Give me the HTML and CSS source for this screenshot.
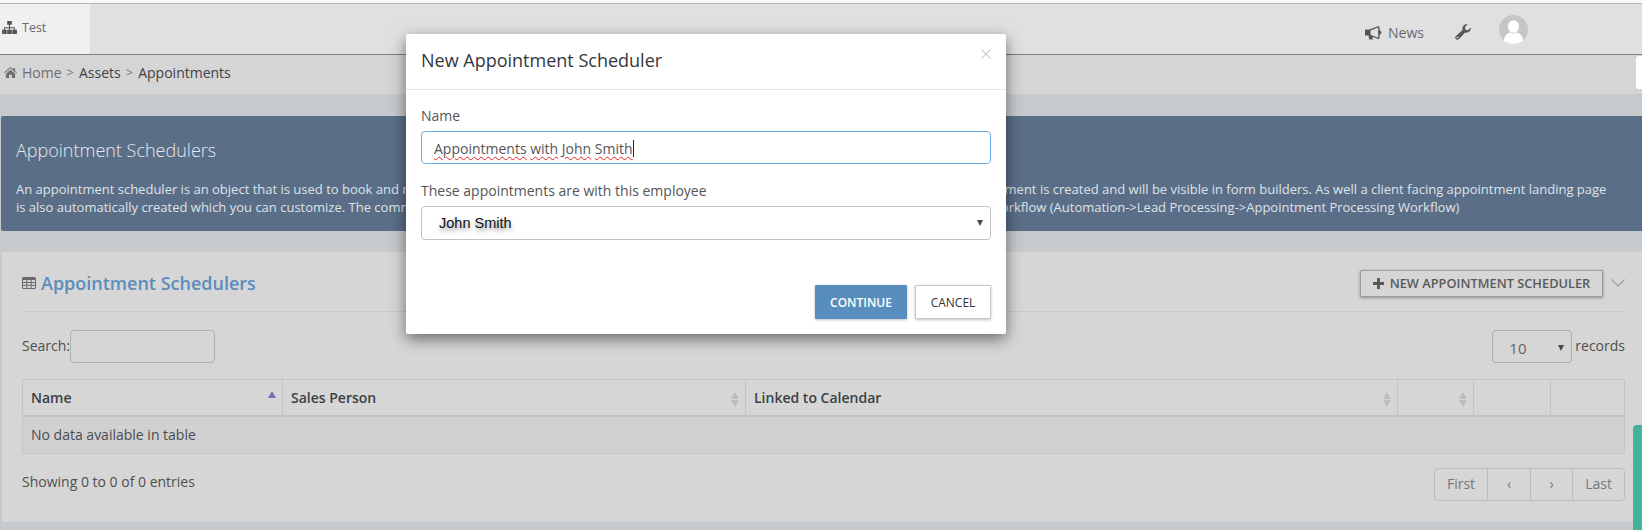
FILE: index.html
```html
<!DOCTYPE html>
<html lang="en">
<head>
<meta charset="utf-8">
<title>Appointment Schedulers</title>
<link rel="stylesheet" href="styles.css">
</head>
<body>
<div class="edge"></div>
<header class="topbar">
  <div class="tab">
    <svg class="icon-sitemap" viewBox="0 0 16 14"><path d="M5.500 0h5v4h-5zM7.400 4h1.200v2.600h5.200V9.500h-1.200V7.800H8.600V9.500H7.400V7.800H3.400v1.700H2.200V6.600h5.200zM0 9.500h5V14H0zM5.500 9.500h5V14h-5zM11 9.500h5V14h-5z"/></svg>
    <span>Test</span>
  </div>
  <nav class="topnav">
    <svg class="icon-bullhorn" viewBox="0 0 17 14"><path d="M0 3.500h4.200L13 0.300c.8-.3 1.600.2 1.600 1v3.100c1.100.3 1.900 1.200 1.900 2.200s-.8 1.900-1.900 2.200v3.100c0 .8-.8 1.300-1.600 1L7.500 10.800 7.800 13.500H4.200L3.500 9.500H0zM5.500 4.400v4.400l7.700 2.900V1.500z"/></svg>
    <span class="news">News</span>
    <svg class="icon-wrench" viewBox="0 0 16 16"><path d="M15.700 3.600c.3 1.500-.2 3-1.300 4-1.200 1-2.800 1.300-4.300.8L4 15.100c-.9.900-2.200.9-3.100 0s-.9-2.200 0-3.100l6.700-6.100C7.100 4.400 7.400 2.800 8.500 1.700 9.500.6 11 .1 12.500.4L9.900 3l.6 2.700 2.600.6zM2.500 12.500a.9.9 0 1 0 0 1.800.9.9 0 0 0 0-1.800z"/></svg>
    <svg class="avatar" viewBox="0 0 29 29"><circle cx="14.500" cy="14.500" r="14.500" fill="#c6c6c6"/><ellipse cx="14.500" cy="11.500" rx="5.600" ry="6.300" fill="#fff"/><path d="M4.800 25.500c.5-4.500 3.500-7.500 6.700-8 1.800 1.200 4.200 1.200 6 0 3.200.5 6.200 3.500 6.700 8-2.600 2.200-5.800 3.500-9.700 3.500s-7.100-1.300-9.700-3.500z" fill="#fff"/></svg>
  </nav>
</header>

<div class="crumbs">
  <svg class="icon-home" viewBox="0 0 14 12"><path d="M7 0 10 2.600V1h2v3.300L14 6l-.7.800L7 1.400.7 6.800 0 6zM2 7.300 7 3l5 4.300V12H8.500V8.500h-3V12H2z"/></svg>
  <span class="crumb-home">Home</span><span class="sep">&gt;</span><span>Assets</span><span class="sep">&gt;</span><span>Appointments</span>
  <span class="side-tab"></span>
</div>

<main>
  <section class="banner">
    <h1>Appointment Schedulers</h1>
    <p>An appointment scheduler is an object that is used to book and <span class="under-modal">manage appointments with your clients and your staff members. A new form field for this appointment</span> is created and will be visible in form builders. As well a client facing appointment landing page is also automatically created which you can customize. The communication sent for each new client appointment is then handled by the appointment processing workflow (Automation-&gt;Lead Processing-&gt;Appointment Processing Workflow)</p>
  </section>

  <section class="card">
    <div class="card-head">
      <svg class="icon-table" viewBox="0 0 14 12"><path fill-rule="evenodd" d="M1.500 0h11A1.500 1.500 0 0 1 14 1.500v9a1.500 1.500 0 0 1-1.500 1.500h-11A1.500 1.500 0 0 1 0 10.500v-9A1.500 1.500 0 0 1 1.500 0zM1 3v2h3.300V3zm4.300 0v2h3.400V3zm4.400 0v2H13V3zM1 6v1.800h3.300V6zm4.300 0v1.800h3.400V6zm4.400 0v1.800H13V6zM1 8.800v1.700c0 .3.200.5.500.5h2.800V8.800zm4.300 0V11h3.400V8.800zm4.400 0V11h2.800c.3 0 .5-.2.500-.5V8.800z"/></svg>
      <h2>Appointment Schedulers</h2>
      <button class="btn-new"><svg class="icon-plus" viewBox="0 0 10 10"><path d="M3.700 0h2.600v3.700H10v2.600H6.300V10H3.700V6.300H0V3.700h3.700z"/></svg>NEW APPOINTMENT SCHEDULER</button>
      <svg class="chevron" viewBox="0 0 14 8"><path d="M.5.500 7 7 13.500.500" fill="none" stroke="#9a9a9a" stroke-width="1.100"/></svg>
    </div>

    <div class="filters">
      <label class="search">Search:<span class="search-box"></span></label>
      <div class="length">
        <div class="length-select"><span>10</span><i class="caret"></i></div>
        <span class="records">records</span>
      </div>
    </div>

    <div class="table">
      <div class="tr head">
        <div class="th c1">Name<i class="sort-asc"></i></div>
        <div class="th c2">Sales Person<i class="sort"></i></div>
        <div class="th c3">Linked to Calendar<i class="sort"></i></div>
        <div class="th c4"><i class="sort"></i></div>
        <div class="th c5"></div>
        <div class="th c6"></div>
      </div>
      <div class="tr body">No data available in table</div>
    </div>

    <div class="foot">
      <span>Showing 0 to 0 of 0 entries</span>
      <div class="pager">
        <span class="p1">First</span><span class="p2">&#8249;</span><span class="p3">&#8250;</span><span class="p4">Last</span>
      </div>
    </div>
  </section>
</main>

<div class="green-tab"></div>

<div class="modal">
  <div class="modal-head">
    <h3>New Appointment Scheduler</h3>
    <svg class="close" viewBox="0 0 10 10"><path d="M.5.500l9 9M9.500.500l-9 9" stroke="#d0d0d0" stroke-width="1.200" fill="none"/></svg>
  </div>
  <div class="modal-body">
    <div class="field-label">Name</div>
    <div class="input"><span class="value"><u>Appointments</u> <u>with</u> <u>John</u> <u>Smith</u></span><i class="cursor"></i></div>
    <div class="field-label second">These appointments are with this employee</div>
    <div class="select"><span>John Smith</span><i class="caret"></i></div>
  </div>
  <div class="modal-foot">
    <button class="btn-continue">CONTINUE</button>
    <button class="btn-cancel">CANCEL</button>
  </div>
</div>
</body>
</html>
```

FILE: styles.css
```css
* { box-sizing: border-box; }
html, body { margin: 0; height: 530px; overflow: hidden; }
body {
  position: relative;
  background: #c7cacd;
  font-family: "Open Sans", sans-serif;
  font-size: 14px;
  color: #4f4f4f;
}
h1, h2, h3, p { margin: 0; font-weight: normal; }

.edge { height: 3px; background: #f8f8f8; }
.topbar {
  position: relative;
  height: 52px;
  border-top: 1px solid #b4b4b4;
  border-bottom: 1px solid #7e7e7e;
  background: #e0e0e0;
  display: flex;
  justify-content: space-between;
  box-shadow: 0 1px 2px rgba(0, 0, 0, .25);
}
.tab {
  width: 90px;
  background: #f0f0f0;
  display: flex;
  align-items: center;
  gap: 5px;
  padding: 0 0 4px 2px;
  font-size: 12.500px;
  color: #666b72;
}
.icon-sitemap { width: 15px; height: 13px; fill: #555; }
.topnav { display: flex; align-items: center; padding-right: 114px; color: #666b72; }
.icon-bullhorn { width: 17px; height: 14px; fill: #555; margin: 7px 6px 0 0; }
.news { font-size: 14px; margin-top: 7px; }
.icon-wrench { width: 16px; height: 16px; fill: #555; margin: 6px 0 0 31px; }
.avatar { width: 29px; height: 29px; margin: 0 0 0 28px; }

.crumbs {
  position: relative;
  height: 39px;
  background: #d5d5d5;
  display: flex;
  align-items: center;
  padding: 0 0 5px 4px;
  color: #3f4246;
  font-size: 14px;
}
.icon-home { width: 13px; height: 11px; fill: #6e6e6e; margin-right: 5px; }
.crumb-home { color: #6c7076; }
.sep { color: #777; margin: 0 5px; font-size: 13px; }
.side-tab {
  position: absolute;
  right: 0;
  top: 1px;
  width: 6px;
  height: 33px;
  background: #fff;
  border-radius: 3px 0 0 3px;
}

.banner {
  height: 115px;
  margin: 22px 0 0 1px;
  padding: 21px 34px 0 15px;
  background: #5b6e87;
  color: #dfe3e8;
  border-radius: 2px 0 0 2px;
}
.banner h1 { font-size: 18px; font-weight: 300; line-height: 26px; color: #e6e9ed; }
.banner p { font-size: 13px; line-height: 18px; margin-top: 17px; }
.under-modal { word-spacing: .7px; }

.card {
  height: 270px;
  margin: 21px 0 0 2px;
  padding: 0 17px 0 20px;
  background: #d6d6d6;
}
.card-head {
  height: 60px;
  border-bottom: 1px solid #c8c8c8;
  display: flex;
  align-items: center;
  padding-top: 3px;
}
.icon-table { width: 14px; height: 12px; fill: #6c6a68; margin: 0 5px 0 0; }
.card-head h2 { font-size: 18px; font-weight: 600; color: #5a8dbd; flex: 1; }
.btn-new {
  height: 27px;
  width: 243px;
  display: flex;
  align-items: center;
  justify-content: center;
  gap: 6px;
  padding: 0;
  background: #d6d6d6;
  border: 1px solid #9d9d9d;
  border-radius: 1px;
  box-shadow: 0 1px 3px rgba(0, 0, 0, .35);
  font: 600 12.800px "Open Sans", sans-serif;
  color: #5a5a5a;
}
.icon-plus { width: 11px; height: 11px; fill: #555; }
.chevron { width: 14px; height: 8px; margin-left: 8px; }

.filters {
  display: flex;
  justify-content: space-between;
  align-items: center;
  margin-top: 18px;
  height: 33px;
}
.search { display: flex; align-items: center; }
.search-box {
  width: 145px;
  height: 33px;
  margin-top: 2px;
  border: 1px solid #aeaeae;
  border-radius: 4px;
}
.length { display: flex; align-items: center; gap: 3px; }
.records { padding-bottom: 2px; }
.length-select {
  width: 80px;
  height: 33px;
  border: 1px solid #aeaeae;
  border-radius: 4px;
  display: flex;
  justify-content: space-between;
  align-items: center;
  padding: 2px 7px 0 16px;
  font-size: 15px;
  color: #666;
}
.search { height: 33px; padding-bottom: 2px; }
.caret {
  width: 0;
  height: 0;
  border-left: 3px solid transparent;
  border-right: 3px solid transparent;
  border-top: 6px solid #4a4a4a;
}

.table { margin-top: 16px; border: 1px solid #c4c4c4; height: 75px; }
.tr { height: 37px; }
.head { display: flex; border-bottom: 2px solid #c2c2c2; }
.th {
  position: relative;
  padding: 0 8px;
  font-weight: 600;
  color: #3c3f44;
  display: flex;
  align-items: center;
  border-right: 1px solid #c4c4c4;
}
.c1 { width: 260px; }
.c2 { width: 463px; }
.c3 { width: 652px; }
.c4 { width: 76px; }
.c5 { width: 77px; }
.c6 { flex: 1; border-right: 0; }
.sort-asc, .sort { position: absolute; right: 6px; }
.sort-asc {
  top: 11px;
  border-left: 4px solid transparent;
  border-right: 4px solid transparent;
  border-bottom: 7px solid #6e70b8;
}
.sort { top: 12px; width: 8px; height: 15px; }
.sort::before, .sort::after {
  content: "";
  position: absolute;
  left: 0;
  border-left: 4px solid transparent;
  border-right: 4px solid transparent;
}
.sort::before { top: 0; border-bottom: 7px solid #bcbcbc; }
.sort::after { bottom: 0; border-top: 7px solid #bcbcbc; }
.body {
  height: 35px;
  background: #d0d0d0;
  padding-left: 8px;
  line-height: 36px;
  color: #4a4d52;
}

.foot {
  display: flex;
  justify-content: space-between;
  margin-top: 14px;
  height: 33px;
}
.foot > span { margin-top: 4px; }
.pager {
  display: flex;
  width: 191px;
  height: 33px;
  border: 1px solid #bdbdbd;
  border-radius: 4px;
  color: #75787c;
  line-height: 29px;
  text-align: center;
}
.pager span { border-right: 1px solid #bdbdbd; }
.p1 { width: 53px; }
.p2 { width: 43px; }
.p3 { width: 42px; }
.p4 { flex: 1; border-right: 0 !important; }

.green-tab {
  position: absolute;
  right: 0;
  bottom: 0;
  width: 9px;
  height: 105px;
  background: #42b39a;
  border-radius: 4px 0 0 0;
}

.modal {
  position: absolute;
  left: 406px;
  top: 34px;
  width: 600px;
  height: 300px;
  background: #fff;
  border-radius: 2px;
  box-shadow: 0 5px 15px rgba(0, 0, 0, .5);
}
.modal-head {
  position: relative;
  height: 56px;
  border-bottom: 1px solid #e8e8e8;
  padding: 14px 15px 0;
}
.modal-head h3 { font-size: 18px; line-height: 24px; color: #33383e; }
.close { position: absolute; right: 15px; top: 15px; width: 10px; height: 10px; }
.modal-body { padding: 16px 15px 0; }
.field-label { line-height: 20px; color: #555; }
.second { margin-top: 17px; }
.input {
  height: 33px;
  margin-top: 5px;
  border: 1px solid #66afe9;
  border-radius: 4px;
  padding: 1px 12px 0;
  color: #555;
  display: flex;
  align-items: center;
}
.value { white-space: pre; }
.input u { text-decoration: underline wavy #e02020 1px; text-underline-offset: 2px; }
.cursor { width: 1px; height: 17px; background: #222; }
.select {
  height: 34px;
  margin-top: 5px;
  border: 1px solid #c4c4c4;
  border-radius: 4px;
  display: flex;
  justify-content: space-between;
  align-items: center;
  padding: 0 7px 0 17px;
  font-family: "Liberation Sans", sans-serif;
  font-size: 14.500px;
  color: #111;
}
.select span { text-shadow: 0 3px 4px rgba(0, 0, 0, .45); }
.modal-foot {
  display: flex;
  justify-content: flex-end;
  gap: 8px;
  padding: 45px 15px 0;
}
.modal-foot button {
  height: 34px;
  padding: 0;
  border-radius: 1px;
  font: 600 12px "Open Sans", sans-serif;
  box-shadow: 0 1px 3px rgba(0, 0, 0, .25);
}
.btn-continue { width: 92px; background: #578ebe; border: 0; color: #fff; }
.modal-foot .btn-cancel { width: 76px; background: #fff; border: 1px solid #c8c8c8; color: #333; font-weight: 500; }
```
